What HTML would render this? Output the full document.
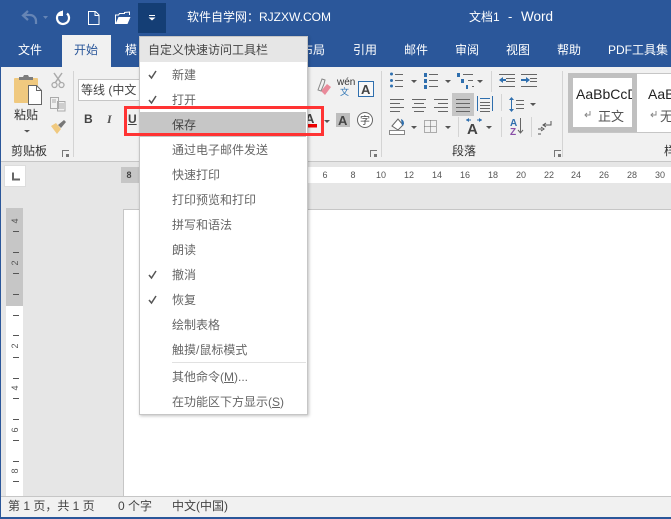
<!DOCTYPE html>
<html><head><meta charset="utf-8">
<style>
html,body{margin:0;padding:0;background:#fff}
#p{position:relative;width:671px;height:519px;overflow:hidden;background:#e6e6e6;font-family:"Liberation Sans","Noto Sans CJK SC",sans-serif;font-size:12px;color:#444}
#p div,#p span.t{position:absolute}
.t{position:absolute;white-space:nowrap;line-height:16px}
.w{color:#fff}
.m{color:#666;left:172px}
.rn{position:absolute;top:169px;width:20px;text-align:center;font-size:9px;line-height:12px;color:#555}
.vn{position:absolute;left:9px;width:12px;height:12px;text-align:center;font-size:9px;line-height:12px;color:#555;transform:rotate(-90deg)}
.vt{position:absolute;left:13px;width:6px;height:1px;background:#555}
svg{position:absolute;left:0;top:0}
</style></head><body>
<div id="p">
<div style="left:0;top:0;width:671px;height:67px;background:#2b579a"></div>
<div style="left:138px;top:3px;width:28px;height:30px;background:#143e75"></div>
<div style="left:62px;top:35px;width:49px;height:32px;background:#f1f1f1"></div>
<div style="left:0;top:67px;width:671px;height:94px;background:#f1f1f1"></div>
<div style="left:0;top:161px;width:671px;height:1px;background:#c6c6c6"></div>
<div style="left:139px;top:167px;width:532px;height:16px;background:#fff"></div>
<div style="left:121px;top:167px;width:18px;height:16px;background:#c6c6c6"></div>
<div style="left:123px;top:209px;width:548px;height:287px;background:#fff;border-top:1px solid #c6c6c6;border-left:1px solid #c6c6c6;box-sizing:border-box"></div>
<div style="left:4px;top:165px;width:22px;height:22px;background:#fff;box-sizing:border-box;border:1px solid #ddd"></div>
<div style="left:6px;top:208px;width:17px;height:98px;background:#c6c6c6"></div>
<div style="left:6px;top:306px;width:17px;height:190px;background:#fff"></div>
<div style="left:0;top:496px;width:671px;height:21px;background:#f1f1f1;border-top:1px solid #c6c6c6;box-sizing:border-box"></div>
<div style="left:0;top:517px;width:671px;height:2px;background:#2b579a"></div>
<div style="left:0;top:67px;width:1px;height:450px;background:#2b579a"></div>

<span class="t w" style="left:187px;top:9px;font-size:12px">软件自学网：RJZXW.COM</span>
<span class="t w" style="left:469px;top:9px;font-size:12px">文档1</span>
<span class="t w" style="left:508px;top:9px;font-size:13px">-</span>
<span class="t w" style="left:521px;top:9px;font-size:13.500px">Word</span>
<span class="t w" style="left:18px;top:42px">文件</span>
<span class="t" style="left:74px;top:42px;color:#2b579a">开始</span>
<span class="t w" style="left:125px;top:42px">模</span>
<span class="t w" style="left:301px;top:42px">布局</span>
<span class="t w" style="left:353px;top:42px">引用</span>
<span class="t w" style="left:404px;top:42px">邮件</span>
<span class="t w" style="left:455px;top:42px">审阅</span>
<span class="t w" style="left:506px;top:42px">视图</span>
<span class="t w" style="left:557px;top:42px">帮助</span>
<span class="t w" style="left:608px;top:42px">PDF工具集</span>

<span class="t" style="left:14px;top:107px;color:#333">粘贴</span>
<span class="t" style="left:11px;top:143px;color:#333">剪贴板</span>
<div style="left:78px;top:79px;width:70px;height:22px;background:#fff;border:1px solid #c6c6c6;box-sizing:border-box"></div>
<span class="t" style="left:81px;top:82px">等线 (中文</span>
<span class="t" style="left:84px;top:111px;font-weight:bold;color:#444">B</span>
<span class="t" style="left:107px;top:111px;font-style:italic;font-family:'Liberation Serif',serif;font-weight:bold;color:#555">I</span>
<span class="t" style="left:128px;top:111px;font-weight:bold;text-decoration:underline;color:#444">U</span>
<span class="t" style="left:337px;top:77px;font-size:10px;line-height:11px;color:#333">wén</span>
<span class="t" style="left:340px;top:87px;font-size:9px;line-height:11px;color:#2f75b5">文</span>
<span class="t" style="left:452px;top:143px;color:#333">段落</span>
<span class="t" style="left:664px;top:143px;color:#333">样</span>
<div style="left:568px;top:73px;width:110px;height:60px;background:#fff;border:1px solid #c6c6c6;box-sizing:border-box"></div>
<div style="left:568px;top:73px;width:69px;height:59px;background:#fff;border:5px solid #c0c0c0;box-sizing:border-box"></div>
<span class="t" style="left:576px;top:86px;font-size:14px;color:#222;width:56px;overflow:hidden">AaBbCcDd</span>
<span class="t" style="left:648px;top:86px;font-size:14px;color:#222">AaB</span>
<span class="t" style="left:598px;top:109px;color:#555;font-size:13px">正文</span>
<span class="t" style="left:660px;top:109px;color:#555;font-size:13px">无</span>

<span class="rn" style="left:119px;font-weight:bold;color:#444">8</span>
<span class="rn" style="left:315px">6</span><span class="rn" style="left:343px">8</span><span class="rn" style="left:371px">10</span><span class="rn" style="left:399px">12</span><span class="rn" style="left:427px">14</span><span class="rn" style="left:455px">16</span><span class="rn" style="left:483px">18</span><span class="rn" style="left:511px">20</span><span class="rn" style="left:539px">22</span><span class="rn" style="left:566px">24</span><span class="rn" style="left:594px">26</span><span class="rn" style="left:622px">28</span><span class="rn" style="left:650px">30</span>

<span class="vn" style="top:215px">4</span><span class="vn" style="top:257px">2</span><span class="vn" style="top:340px">2</span><span class="vn" style="top:382px">4</span><span class="vn" style="top:424px">6</span><span class="vn" style="top:465px">8</span>
<i class="vt" style="top:231px"></i><i class="vt" style="top:252px"></i><i class="vt" style="top:273px"></i><i class="vt" style="top:294px"></i><i class="vt" style="top:315px"></i><i class="vt" style="top:335px"></i><i class="vt" style="top:357px"></i><i class="vt" style="top:378px"></i><i class="vt" style="top:398px"></i><i class="vt" style="top:419px"></i><i class="vt" style="top:440px"></i><i class="vt" style="top:461px"></i><i class="vt" style="top:481px"></i>

<span class="t" style="left:8px;top:498px;color:#444">第 1 页，共 1 页</span>
<span class="t" style="left:118px;top:498px;color:#444">0 个字</span>
<span class="t" style="left:172px;top:498px;color:#444">中文(中国)</span>

<svg width="671" height="519" viewBox="0 0 671 519" fill="none">
<!-- QAT -->
<path d="M36 24v-3a6 6 0 0 0-6-6h-6M28 11l-5 4.500 5 4.500" stroke="#6685b5" stroke-width="2.200"/>
<path d="M43 16h5l-2.500 3z" fill="#6685b5"/>
<path d="M67 13.500a6 6 0 1 1-4.500-1.500" stroke="#fff" stroke-width="2.200"/><path d="M63 10v6h-5z" fill="#fff"/>
<path d="M88.500 11.500h7l3.500 3.500v9.500h-10.500zM95 11.500v4h4" stroke="#fff"/>
<path d="M115.500 24v-9h3l1-1.500h5v-1l5-.5v3" stroke="#fff" fill="none"/><path d="M118.500 17h12l-3 7h-12z" fill="#fff"/>
<path d="M149 15.500h6" stroke="#fff"/><path d="M148.500 17.500h7l-3.500 3z" fill="#fff"/>
<!-- paste -->
<rect x="14" y="78" width="24" height="25" rx="1" fill="#f0c97f"/>
<path d="M19 80v-3h4l1-2h4l1 2h4v3z" fill="#7d7d7d"/>
<path d="M28.500 85.500h8l5 5v14h-13z" fill="#fff" stroke="#666"/><path d="M36.500 85.500v5h5" stroke="#666"/>
<path d="M24 130h6l-3 2.500z" fill="#555"/>
<!-- cut, copy, brush -->
<path d="M54 73l7 10M62 73l-7 10" stroke="#aaa" stroke-width="1.500"/><circle cx="54.500" cy="85" r="2.500" stroke="#aaa" stroke-width="1.300"/><circle cx="61.500" cy="85" r="2.500" stroke="#aaa" stroke-width="1.300"/>
<path d="M50.500 97.500h8v11h-8zM57.500 101.500h7.500v9.500h-7.500z" stroke="#aaa" fill="#f1f1f1"/><path d="M59 104h5M59 106h5M59 108h5M52 100h4M52 102h4" stroke="#aaa"/>
<path d="M51 126l5-3 5 6-4 5z" fill="#f0c97f"/><path d="M58 125l6-5 2 2-5 6z" fill="#777"/>
<!-- launchers -->
<g stroke="#777"><path d="M62.500 157v-6.500h6.500"/><path d="M370.500 157v-6.500h6.500"/><path d="M554.500 157v-6.500h6.500"/></g>
<path d="M66 154h3v3h-3zM374 154h3v3h-3zM558 154h3v3h-3z" fill="#777"/>
<!-- separators -->
<g stroke="#d4d4d4"><path d="M73.500 71v86M381.500 71v86M562.500 71v86M491.500 71v21M501.500 94v17M458.500 117v20M501.500 117v20M531.500 117v20"/></g>
<!-- eraser etc -->
<path d="M321 91l6-7 4 3-6 8z" fill="#e98a9a"/><path d="M318 90l4-11 3 1-1 4-3 7z" stroke="#888"/>
<rect x="358.500" y="81.500" width="15" height="15" stroke="#2f6fae" fill="#f7f7f7"/>
<text x="361" y="94" font-size="13" font-weight="bold" fill="#444" font-family="Liberation Sans">A</text>
<text x="305" y="123" font-size="13" font-weight="bold" fill="#444" font-family="Liberation Sans">A</text>
<rect x="308" y="124" width="9" height="3.500" fill="#e00"/>
<path d="M324 120h6l-3 3z" fill="#555"/>
<rect x="336" y="113" width="14" height="14" fill="#bdbdbd"/>
<text x="338" y="125" font-size="13" font-weight="bold" fill="#444" font-family="Liberation Sans">A</text>
<circle cx="365" cy="120" r="7.500" stroke="#666" fill="#fff"/>
<text x="360" y="124" font-size="10" fill="#444" font-family="Noto Sans CJK SC">字</text>
<!-- bullets -->
<g fill="#2f6fae"><circle cx="391.500" cy="74" r="1.500"/><circle cx="391.500" cy="80.500" r="1.500"/><circle cx="391.500" cy="86" r="1.500"/><rect x="424" y="73" width="3" height="4"/><rect x="424" y="79" width="3" height="4"/><rect x="424" y="85" width="3" height="4"/><rect x="457" y="73" width="3" height="4"/><rect x="461" y="79" width="3" height="4"/><rect x="466" y="85" width="2" height="4"/></g>
<g stroke="#666"><path d="M395 74.500h8M395 80.500h8M395 86.500h8M429 74.500h9M429 80.500h9M429 86.500h9M463 74.500h10M468 80.500h5M472 86.500h2"/></g>
<g fill="#555"><path d="M411 80h6l-3 3zM445 80h6l-3 3zM477 80h6l-3 3zM530 103h6l-3 3zM411 126h6l-3 3zM445 126h6l-3 3zM486 126h6l-3 3z"/></g>
<!-- indent -->
<g stroke="#666"><path d="M499 74.500h16M506 78.500h9M506 81.500h9M499 86.500h16M521 74.500h16M530 78.500h7M530 81.500h7M521 86.500h16"/></g>
<path d="M499 80l4-3v2h3v2h-3v2zM530 80l-4-3v2h-5v2h5v2z" fill="#2f6fae"/>
<!-- alignment -->
<rect x="452" y="93" width="22" height="23" fill="#c6c6c6"/>
<g stroke="#666"><path d="M390 99.500h14M390 103.500h10M390 107.500h14M390 111.500h10M412 99.500h14M414 103.500h10M412 107.500h14M414 111.500h10M434 99.500h14M438 103.500h10M434 107.500h14M438 111.500h10M456 99.500h14M456 103.500h14M456 107.500h14M456 111.500h14M480 102.500h10M480 105.500h10M480 108.500h10M480 111.500h10M516 100.500h8M516 104.500h8M516 108.500h8"/></g>
<path d="M477.500 96v15M492.500 96v15M480 98.500h10" stroke="#2f6fae"/>
<path d="M511.500 97l-2.500 3h5zM511.500 112l-2.500-3h5z M511 100h1v9h-1z" fill="#2f6fae"/>
<!-- row3 -->
<path d="M392 126l6-7 5 6-5 5z" stroke="#666" fill="#fff"/><path d="M401 119c2 1 3 2 3 5l-2 2z" fill="#2f6fae"/><rect x="389.500" y="130.500" width="15" height="4" stroke="#888" fill="#fff"/>
<path d="M424.500 120.500h12v12h-12zM430.500 120.500v12M424.500 126.500h12" stroke="#666" stroke-dasharray="1 1"/>
<text x="467" y="134" font-size="15" font-weight="bold" fill="#444" font-family="Liberation Sans">A</text>
<path d="M466 120h5M477 120h5" stroke="#2f6fae"/><path d="M466 120l3-2v4zM482 120l-3-2v4z" fill="#2f6fae"/>
<text x="510" y="126" font-size="10" font-weight="bold" fill="#2f6fae" font-family="Liberation Sans">A</text>
<text x="510" y="135" font-size="10" font-weight="bold" fill="#8a4fa8" font-family="Liberation Sans">Z</text>
<path d="M520.500 118v15M518 130l2.500 3 2.500-3" stroke="#666"/>
<path d="M551 121v4h-8M546 123l-3 2 3 2M542 129h-4M541 127l3 2-3 2M541 134h-3" stroke="#555"/>
<!-- style marks -->
<path d="M590 111v4h-5M587 113l-2 2 2 2" stroke="#888"/><path d="M656 111v4h-5M653 113l-2 2 2 2" stroke="#888"/>
<!-- tab stop -->
<path d="M13 172.500v7h7" stroke="#666" stroke-width="2"/>
</svg>

<!-- menu -->
<div style="left:139px;top:36px;width:169px;height:379px;background:#fff;border:1px solid #c6c6c6;box-sizing:border-box;box-shadow:1px 1px 3px rgba(0,0,0,.25)"></div>
<div style="left:140px;top:37px;width:167px;height:25px;background:#e6e6e6"></div>
<span class="t" style="left:148px;top:42px;color:#444">自定义快速访问工具栏</span>
<div style="left:140px;top:112px;width:166px;height:25px;background:#c6c6c6"></div>
<span class="t m" style="top:67px">新建</span>
<span class="t m" style="top:92px">打开</span>
<span class="t m" style="top:117px;color:#444">保存</span>
<span class="t m" style="top:142px">通过电子邮件发送</span>
<span class="t m" style="top:167px">快速打印</span>
<span class="t m" style="top:192px">打印预览和打印</span>
<span class="t m" style="top:217px">拼写和语法</span>
<span class="t m" style="top:242px">朗读</span>
<span class="t m" style="top:267px">撤消</span>
<span class="t m" style="top:292px">恢复</span>
<span class="t m" style="top:317px">绘制表格</span>
<span class="t m" style="top:342px">触摸/鼠标模式</span>
<div style="left:172px;top:362px;width:134px;height:1px;background:#e1e1e1"></div>
<span class="t m" style="top:369px">其他命令(<u>M</u>)...</span>
<span class="t m" style="top:394px">在功能区下方显示(<u>S</u>)</span>

<svg width="671" height="519" viewBox="0 0 671 519" fill="none">
<g stroke="#555" stroke-width="1.500"><path d="M149 75l2.500 3 4.500-7M149 100l2.500 3 4.500-7M149 275l2.500 3 4.500-7M149 300l2.500 3 4.500-7"/></g>
<rect x="125.500" y="107.500" width="197" height="27" stroke="#f33" stroke-width="3"/>
</svg>
</div>
</body></html>
